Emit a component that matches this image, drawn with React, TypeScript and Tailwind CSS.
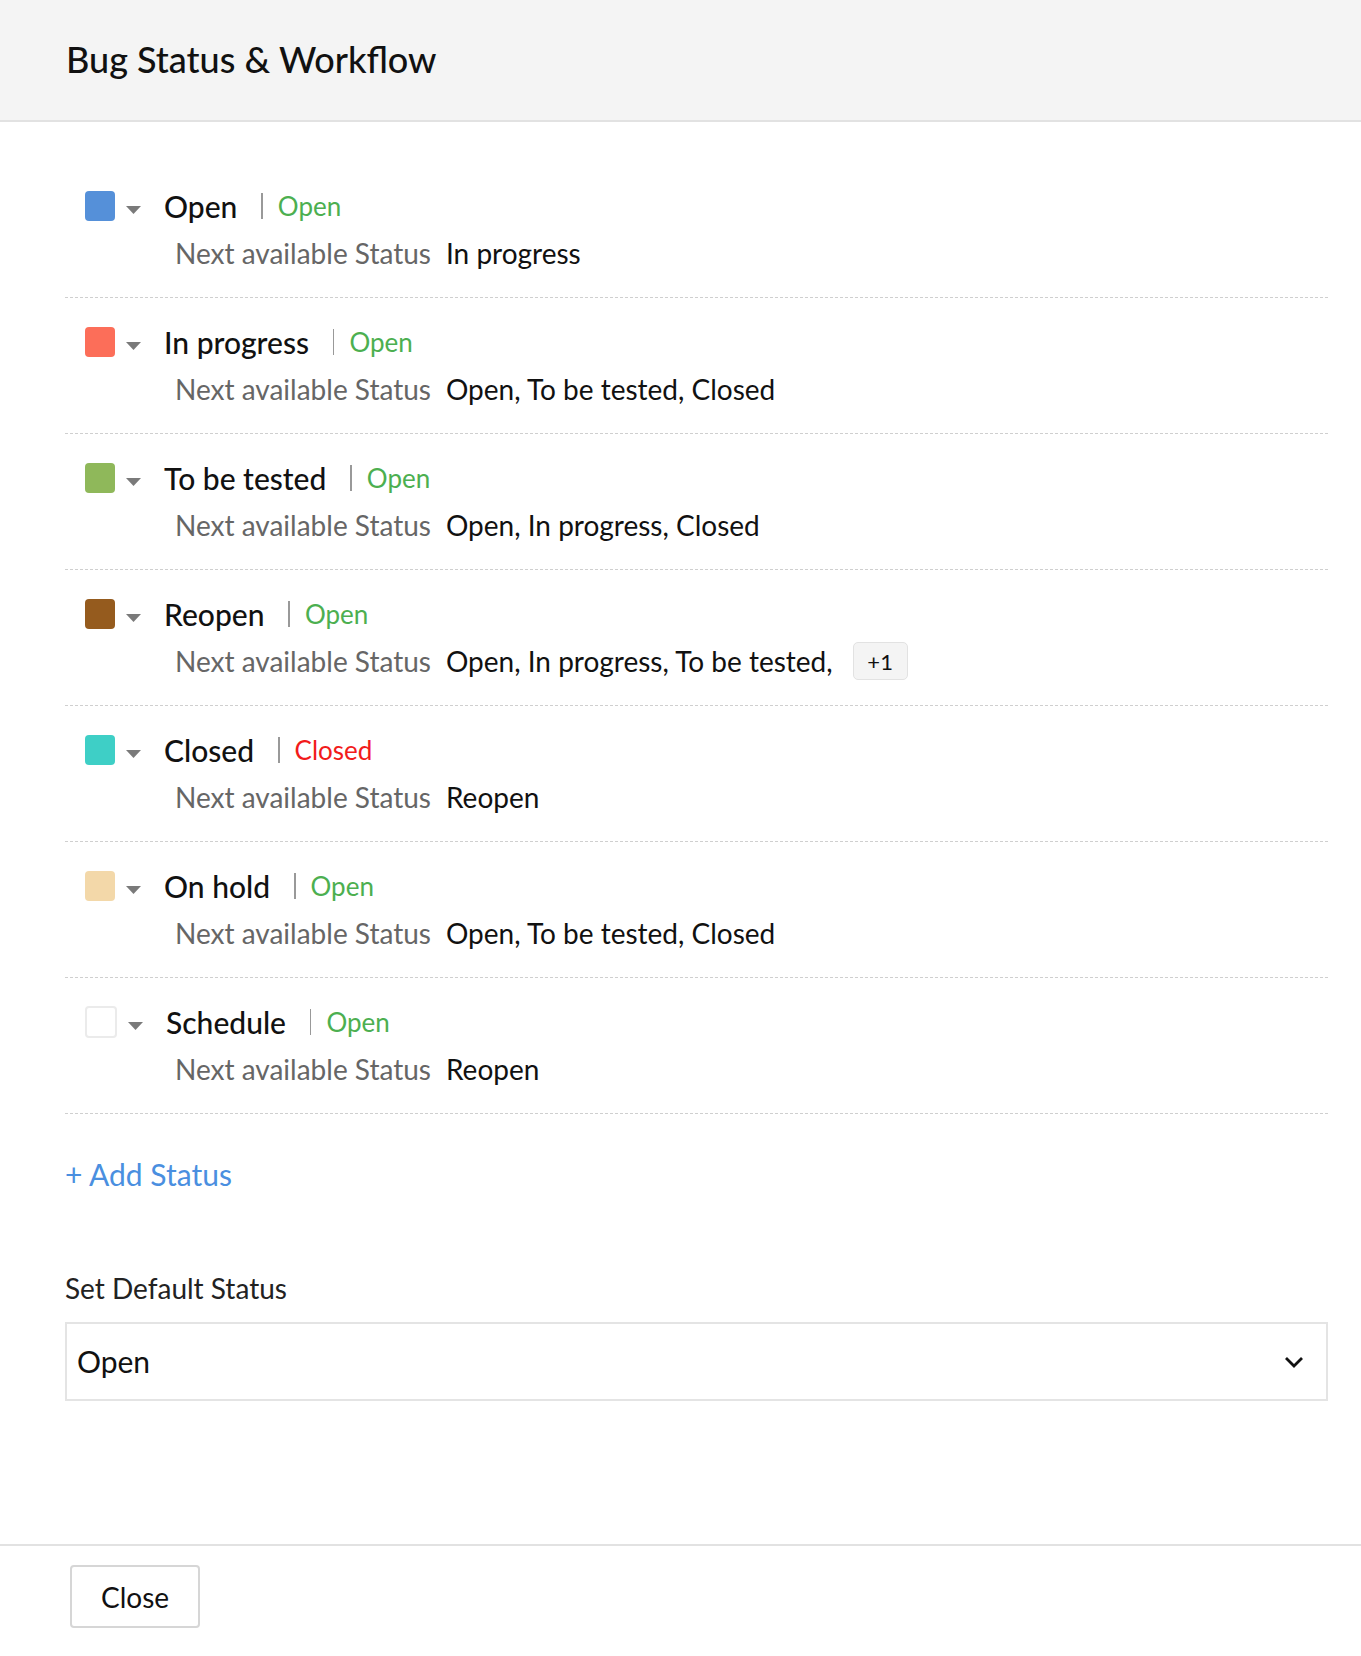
import { type ReactNode } from "react";

type Estado = {
  nome: string;
  cor: string;
  tipo: "Open" | "Closed";
  proximos: string;
  mais?: number;
  borda?: boolean;
};

const ESTADOS: Estado[] = [
  { nome: "Open", cor: "bg-[#5590d9]", tipo: "Open", proximos: "In progress" },
  { nome: "In progress", cor: "bg-[#fc6e59]", tipo: "Open", proximos: "Open, To be tested, Closed" },
  { nome: "To be tested", cor: "bg-[#8fb85a]", tipo: "Open", proximos: "Open, In progress, Closed" },
  { nome: "Reopen", cor: "bg-[#955b1e]", tipo: "Open", proximos: "Open, In progress, To be tested,", mais: 1 },
  { nome: "Closed", cor: "bg-[#3ecfc6]", tipo: "Closed", proximos: "Reopen" },
  { nome: "On hold", cor: "bg-[#f3d8a9]", tipo: "Open", proximos: "Open, To be tested, Closed" },
  { nome: "Schedule", cor: "bg-white", tipo: "Open", proximos: "Reopen", borda: true },
];

function Caret() {
  return (
    <svg width="15" height="8" viewBox="0 0 15 8" className="shrink-0">
      <path d="M0 0h15L7.5 8z" fill="#7a7a7a" />
    </svg>
  );
}

function Chevron() {
  return (
    <svg width="20" height="12" viewBox="0 0 20 12" fill="none">
      <path d="M2 2l8 8 8-8" stroke="#111" strokeWidth="2.8" />
    </svg>
  );
}

function Linha({ estado }: { estado: Estado }): ReactNode {
  return (
    <div className="border-b border-dashed border-[#cfcfcf] py-[24px]">
      <div className="flex h-[40px] items-center">
        {estado.borda ? (
          <span className={`ml-[20px] h-[32px] w-[32px] rounded-[4px] border-2 border-[#ebebeb] ${estado.cor}`} />
        ) : (
          <span className={`ml-[20px] h-[30px] w-[30px] rounded-[4px] ${estado.cor}`} />
        )}
        <span className="ml-[11px] mt-[7px] flex">
          <Caret />
        </span>
        <span className="ml-[23px] text-[30px] font-medium text-[#111]">{estado.nome}</span>
        <span className="ml-[24px] h-[26px] w-[1.5px] bg-[#999]" />
        <span
          className={
            estado.tipo === "Closed"
              ? "ml-[15px] text-[26px] text-[#f21b1b]"
              : "ml-[15px] text-[26px] text-[#4caf50]"
          }
        >
          {estado.tipo}
        </span>
      </div>
      <div className="mt-[7px] flex h-[40px] items-center pl-[110px] text-[28px]">
        <span className="text-[#666]">Next available Status</span>
        <span className="ml-[15px] text-[#111]">{estado.proximos}</span>
        {estado.mais && (
          <span className="ml-[20px] flex h-[38px] w-[55px] items-center justify-center rounded-[5px] border border-[#e2e2e2] bg-[#f4f4f4] text-[22px] text-[#111]">
            +{estado.mais}
          </span>
        )}
      </div>
    </div>
  );
}

export default function App() {
  return (
    <div className="flex min-h-[1656px] flex-col bg-white font-['Lato','Noto_Sans',sans-serif] text-[#111]">
      <header className="flex h-[122px] items-center border-b-2 border-[#e2e2e2] bg-[#f4f4f4] pb-[2px] pl-[66px]">
        <h1 className="text-[36px] font-medium text-[#111]">Bug Status &amp; Workflow</h1>
      </header>

      <main className="flex-1 pl-[65px] pr-[33px] pt-[40px]">
        {ESTADOS.map((e) => (
          <Linha key={e.nome} estado={e} />
        ))}

        <button type="button" className="mt-[38px] text-[30px] text-[#4a8fe0]">
          + Add Status
        </button>

        <div className="mt-[70px] text-[28px] text-[#222]">Set Default Status</div>
        <div className="mt-[13px] flex h-[79px] items-center justify-between border-2 border-[#e4e4e4] pl-[10px] pr-[22px]">
          <span className="text-[30px] text-[#111]">Open</span>
          <Chevron />
        </div>
      </main>

      <footer className="mt-[142px] flex h-[112px] items-start border-t-2 border-[#e2e2e2] pl-[70px] pt-[19px]">
        <button
          type="button"
          className="h-[63px] w-[130px] rounded-[4px] border-2 border-[#d6d6d6] bg-white text-[28px] text-[#111]"
        >
          Close
        </button>
      </footer>
    </div>
  );
}
